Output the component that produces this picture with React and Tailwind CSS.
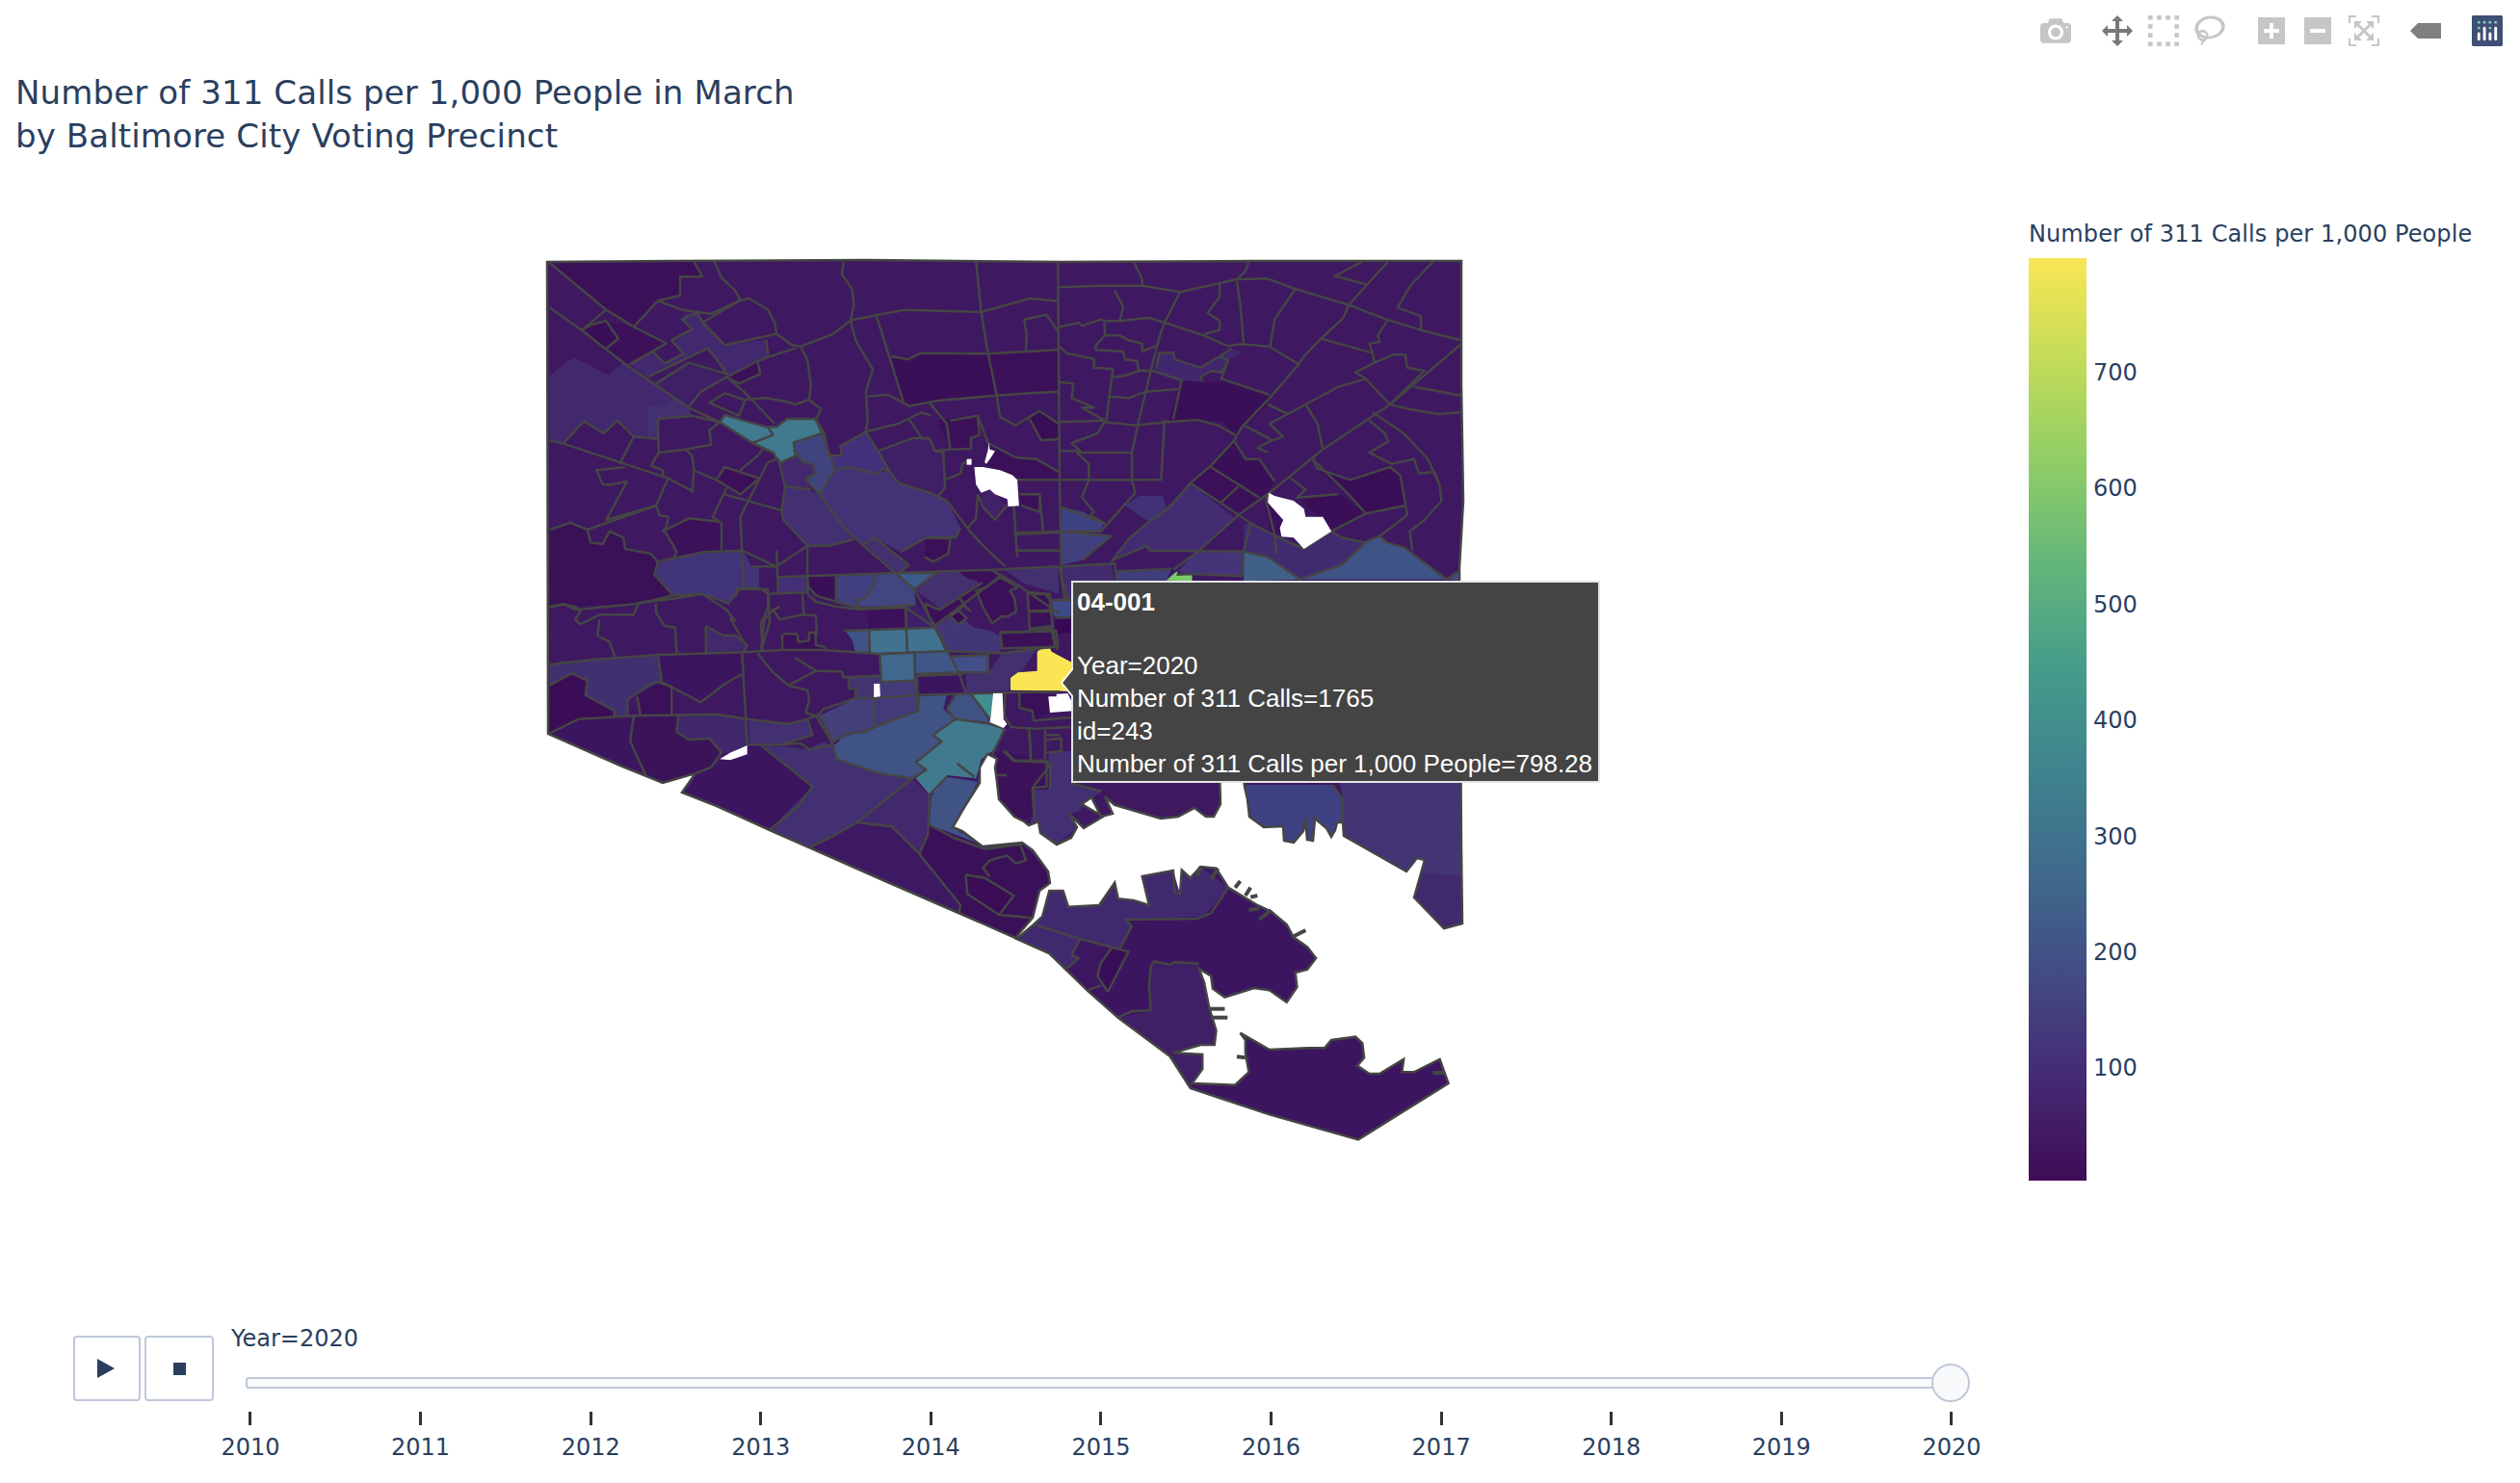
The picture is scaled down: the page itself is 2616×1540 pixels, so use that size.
import React from "react";

const years = [2010, 2011, 2012, 2013, 2014, 2015, 2016, 2017, 2018, 2019, 2020];
const colorTicks = [700, 600, 500, 400, 300, 200, 100];

// outline of the city north of the harbour, page coordinates
const mainland =
  "568,272 700,271 900,270 1100,272 1300,271 1517,271 1517,400 1519,520 1515,590 1517,880 1518,959 1499,964 1468,932 1479,893 1471,891 1460,905 1395,868 1394,854 1388,854 1386,862 1382,869 1377,860 1365,850 1363,873 1357,872 1355,850 1353,863 1343,875 1333,873 1332,858 1312,859 1297,848 1295,830 1292,817 1290,800 1266,800 1267,835 1260,848 1252,848 1240,839 1223,848 1205,850 1157,836 1147,827 1155,845 1143,848 1133,828 1123,835 1145,848 1125,860 1110,845 1118,859 1112,870 1097,877 1080,865 1078,853 1068,857 1063,853 1053,848 1037,830 1035,812 1033,797 1035,788 1025,783 1017,797 1017,813 1000,840 989,859 999,863 1020,879 1061,875 1072,883 1088,905 1090,917 1079,925 1072,953 1054,974 995,948 919,915 840,880 799,862 744,837 708,823 722,803 688,813 644,795 569,762";

// each frame maps a zoomed crop of the plot back to the page
const frames = {
  a: "translate(540 250) scale(0.35714 0.33333)",
  b: "translate(1000 250) scale(0.35714 0.33333)",
  c: "translate(540 600) scale(0.35714 0.33333)",
  d: "translate(1000 880) scale(0.35714 0.33333)",
  e: "translate(1000 780) scale(0.33333 0.33333)",
  f: "translate(900 560) scale(0.33333 0.33333)",
};

const fills = {
  a: [
    ["#3c1059", "85,68 250,215 330,268 400,187 465,170 465,112 530,112 505,65"],
    ["#3a0f58", "180,278 205,262 250,250 285,305 247,335"],
    ["#3c1159", "250,335 285,305 250,250 330,268 425,320 318,385"],
    ["#42286c", "85,420 155,362 255,418 300,380 445,490 420,510 368,512 368,618 330,610 282,560 243,600 185,562 125,632 85,622"],
    ["#43306f", "368,512 420,510 445,490 490,520 500,545 405,555 402,618 368,618"],
    ["#42286e", "480,225 515,225 595,325 715,308 722,365 600,425 545,335 370,425 320,385 385,345 420,382 475,352 440,310 500,275 470,245"],
    ["#3f1f66", "395,445 490,380 600,425 525,470 490,518 445,490"],
    ["#3c1059", "600,425 690,375 698,415 635,445"],
    ["#417a8f", "580,565 595,543 715,580 745,580 775,555 858,555 878,600 795,628 800,670 755,692 735,660 675,630"],
    ["#41457f", "795,628 880,602 915,715 895,745 870,790 830,742 860,725 850,695 820,688 795,650"],
    ["#43286f", "755,695 800,672 820,688 850,695 860,725 830,742 845,775 770,765"],
    ["#433073", "765,765 830,775 870,790 965,930 900,950 835,950 765,870 760,840 770,790"],
    ["#43307a", "930,640 1005,595 1040,655 1070,690 1075,715 1050,710 1035,725 950,705 915,715 895,670 935,668"],
    ["#433376", "915,715 950,705 1035,725 1070,715 1100,755 1190,785 1240,810 1280,895 1265,925 1180,925 1105,970 1030,925 995,945 945,900 870,790 895,745"],
    ["#3f1f66", "1040,655 1140,615 1190,615 1205,655 1230,660 1235,770 1215,795 1190,785 1100,755 1075,720"],
    ["#390f57", "1080,360 1125,370 1165,350 1360,352 1385,480 1210,498 1130,515 1115,510"],
    ["#3c1059", "1360,352 1565,340 1565,470 1385,482"],
    ["#3c1059", "1212,560 1240,555 1330,545 1335,605 1310,615 1310,648 1250,650"],
    ["#3a0e56", "1480,555 1510,530 1565,570 1565,618 1515,622"],
    ["#3c1059", "1360,630 1440,675 1500,680 1565,720 1565,745 1440,745 1445,735 1380,710 1350,700"],
    ["#3c1059", "600,705 695,740 640,790 595,770 570,745"],
    ["#3c1159", "420,905 490,865 580,875 585,965 460,990 440,940"],
    ["#3c1059", "1180,930 1250,928 1245,975 1200,1000 1175,985"],
    ["#3c1059", "1450,790 1510,790 1510,845 1455,825"],
    ["#412269", "1335,800 1365,775 1415,825 1380,870 1345,830"],
    ["#3a1157", "88,900 145,878 195,900 205,940 240,945 260,905 300,925 305,960 380,975 400,1000 390,1040 445,1105 345,1130 85,1140"],
    ["#423478", "400,1005 535,970 645,965 650,1080 625,1100 605,1130 530,1100 445,1105 390,1040"],
    ["#43347a", "650,968 672,1015 695,1020 695,1078 650,1078"],
    ["#432f75", "745,1048 830,1045 835,1095 750,1095"],
    ["#3a0f58", "835,1048 918,1045 918,1125 860,1105 835,1075"],
    ["#424080", "920,1045 1030,1040 1030,1065 1005,1110 980,1120 980,1140 920,1125"],
    ["#414580", "985,1140 980,1120 1005,1110 1030,1065 1035,1040 1090,1035 1145,1085 1150,1135"],
    ["#3e5a8a", "1095,1035 1210,1035 1145,1085"],
    ["#43306f", "1210,1035 1375,1025 1395,1045 1280,1130 1220,1145 1150,1090"],
    ["#43306f", "1100,1030 1130,1010 1030,925 1000,945 1090,1030"],
    ["#43306f", "1400,1020 1565,1015 1565,1100 1470,1070"],
  ],
  b: [
    ["#3a0e56", "195,555 225,525 275,570 275,620 225,622"],
    ["#390f57", "635,435 695,440 750,440 755,410 760,430 890,480 885,510 790,605 750,560 620,565 595,565"],
    ["#390f57", "790,620 820,680 860,680 905,750 885,780 860,800 720,705"],
    ["#3c1059", "665,755 720,705 860,800 805,850"],
    ["#3a0f58", "975,800 1090,790 1170,850 1070,905"],
    ["#390e57", "1030,710 1125,745 1240,705 1270,730 1285,820 1170,850 1120,790"],
    ["#3c0f5a", "880,810 930,870 920,915 895,915 880,830"],
    ["#41276e", "560,400 570,350 610,348 615,370 690,395 745,360 780,335 810,348 770,372 750,410 720,405 690,425 695,440 640,435 555,405"],
    ["#3f4282", "285,830 350,845 410,880 395,905 285,908"],
    ["#41407e", "285,908 430,920 345,995 285,1010"],
    ["#432c6e", "285,1015 430,1005 440,1060 310,1115 290,1060"],
    ["#413278", "470,825 510,795 580,795 590,830 540,875"],
    ["#432c72", "660,755 790,865 680,965 540,965 535,950 435,995 480,930 590,830 610,810"],
    ["#433578", "680,965 815,968 810,1045 665,1040 625,1030"],
    ["#413e7e", "445,1030 605,1022 590,1060 445,1060"],
    ["#412b70", "815,885 835,880 900,915 990,960 1070,905 1100,925 1165,940 1100,1010 985,1055 885,985 815,968"],
    ["#406088", "815,968 885,985 980,1055 815,1060"],
    ["#3f5486", "985,1055 1100,1010 1160,945 1210,920 1230,940 1280,955 1400,1055"],
    ["#3e1a60", "1210,920 1290,860 1340,870 1298,905 1305,965 1405,1055 1280,955 1230,940"],
    ["#424a80", "1400,1055 1447,1030 1447,1060"],
    ["#7ccc6a", "590,1058 620,1030 625,1040 665,1038 665,1060"],
    ["#3f4a88", "260,1120 310,1118 310,1170 265,1170"],
    ["#380955", "265,1175 312,1175 312,1222 270,1222"],
  ],
  c: [
    ["#41306f", "85,270 400,240 412,325 342,360 312,378 312,432 275,430 272,415 190,365 195,320 150,298 85,335"],
    ["#3a0d56", "85,340 150,298 195,320 190,365 275,415 272,432 170,440 85,485"],
    ["#3a1158", "340,370 400,325 440,340 440,428 350,430"],
    ["#3c1560", "405,245 645,235 645,300 595,330 525,388 440,340 412,325"],
    ["#3c1560", "85,485 170,440 330,432 320,510 365,615 415,638 290,585"],
    ["#3a1359", "335,430 455,428 455,480 490,505 550,500 585,545 555,590 415,638 365,615 320,510 330,475"],
    ["#41276c", "460,430 570,425 660,440 660,520 610,545 585,545 550,500 490,505 455,480"],
    ["#423070", "665,445 780,455 835,440 850,490 755,520 665,520"],
    ["#3c1560", "470,668 510,610 555,590 610,560 660,522 700,522 850,650 725,785 570,710"],
    ["#433073", "700,522 760,525 840,535 880,510 910,525 920,565 1045,610 1140,625 980,762 840,840 725,785 850,650"],
    ["#3d1963", "840,840 980,762 1080,775 1160,860 1280,1020 1275,1045 1060,945"],
    ["#42286c", "980,762 1140,628 1190,675 1190,770 1160,860 1080,775"],
    ["#3a1158", "1165,860 1190,770 1260,810 1350,845 1460,830 1535,915 1540,950 1510,975 1490,1060 1440,1122 1275,1045 1280,1020"],
    ["#3a0d56", "1295,925 1350,935 1435,990 1392,1050 1300,985"],
    ["#3f5385", "910,525 950,485 1000,480 1155,415 1160,370 1240,365 1230,410 1265,440 1200,490 1225,510 1150,575 1180,598 1140,625 1045,610 920,565"],
    ["#417a8f", "1265,440 1365,455 1405,470 1385,530 1340,565 1325,625 1240,615 1235,650 1190,675 1150,625 1180,598 1150,575 1225,510 1200,490"],
    ["#3f5385", "1195,680 1240,620 1330,635 1285,730 1260,780 1340,830 1190,770"],
    ["#3f5385", "1240,410 1265,365 1310,362 1365,450 1265,440"],
    ["#428d90", "1310,362 1385,360 1365,440"],
    ["#43407a", "870,430 975,375 1030,375 1030,465 910,510"],
    ["#433a7a", "1030,375 1025,325 1150,320 1155,415 1030,465"],
    ["#43346f", "955,310 1045,305 1050,325 1025,325 1030,375 975,375 975,345 955,345"],
    ["#41688d", "1045,240 1145,235 1148,320 1050,325"],
    ["#3f5686", "1150,235 1240,228 1275,295 1150,298"],
    ["#414e88", "1255,245 1360,240 1360,295 1275,295"],
    ["#3c1560", "1155,300 1275,298 1295,358 1155,365"],
    ["#43306f", "1295,300 1360,295 1400,235 1500,225 1420,350 1298,358"],
    ["#3a1158", "762,175 805,175 808,200 840,195 840,170 858,170 860,210 885,215 885,225 765,225"],
    ["#3f5386", "945,165 1015,165 1015,235 975,235 965,195"],
    ["#41728f", "1015,165 1120,160 1125,230 1020,235"],
    ["#41728f", "1125,160 1205,155 1235,228 1128,230"],
    ["#42286c", "540,150 590,180 625,180 660,210 650,230 540,235"],
    ["#433676", "1205,155 1265,110 1320,155 1365,165 1400,185 1395,235 1240,228"],
    ["#3a1158", "1395,170 1545,165 1555,210 1400,218"],
    ["#3a0e58", "1478,100 1535,100 1540,155 1478,155"],
  ],
  d: [
    ["#412970", "1165,0 1288,75 1318,32 1340,38 1310,155 1397,253 1450,238 1447,0"],
  ],
  e: [
    ["#3a1158", "105,10 130,0 155,30 260,30 265,50 215,115 220,195 190,215 160,205 110,150 105,100"],
    ["#433073", "265,20 270,0 340,0 335,100 430,125 405,145 355,190 330,195 355,238 290,290 240,255 235,220 205,230 220,195 215,115 265,50"],
    ["#3e1960", "420,105 700,105 720,100 800,130 800,165 780,205 720,178 670,205 615,210 470,168 440,140"],
    ["#3f4282", "875,105 1150,105 1180,150 1182,220 1165,222 1160,240 1145,268 1130,240 1095,210 1090,278 1070,275 1065,210 1060,250 1030,285 1000,280 995,235 935,238 890,205 885,150"],
    ["#433474", "1150,0 1560,0 1560,390 1380,375 1185,265 1182,150"],
  ],
  f: [
    ["#3c1059", "180,200 225,220 285,180 305,205 210,270 190,235"],
    ["#3c1059", "290,180 360,135 375,150 305,200"],
    ["#370b55", "260,240 285,222 310,245 285,265"],
    ["#3c1059", "285,100 415,95 410,120 370,150 340,130 310,120"],
    ["#3c1059", "340,160 370,150 410,120 470,150 445,160 460,185 465,225 440,240 420,240 390,262 360,210 355,195"],
    ["#3c1560", "155,425 300,420 308,480 158,482"],
    ["#3c1159", "0,215 120,212 122,275 5,278"],
    ["#3e2068", "125,210 180,208 210,270 125,275"],
    ["#3a1158", "415,290 580,285 590,335 420,340"],
    ["#3a1158", "503,225 570,228 578,278 507,282"],
    ["#3a1158", "500,165 555,170 570,190 572,220 503,220"],
    ["#370955", "585,245 635,243 635,290 590,293"],
    ["#3f4a88", "575,190 635,188 635,240 582,238"],
    ["#3a1158", "475,480 555,478 565,490 565,540 520,565 515,535 475,525"],
    ["#3c1159", "430,660 565,695 570,780 410,780 412,700"],
    ["#fae655", "447,432 470,415 530,410 530,350 545,340 570,340 575,350 640,385 640,475 585,472 447,470"],
  ],
};

const lines = {
  a: [
    "85,68 250,215 330,268 425,320 318,385",
    "85,208 180,280 300,380 490,520 580,565",
    "180,278 250,215",
    "250,335 285,305 250,250 205,262 180,278",
    "330,268 400,187 465,170 465,112 530,112 505,65",
    "400,187 470,215 555,228 640,185",
    "565,65 585,115 625,155 640,185 665,180 720,215 740,255 745,290 790,325 815,330 910,290 960,248 1035,232 1120,215 1340,222 1480,180 1565,188",
    "940,65 935,105 965,150 970,200 960,248 975,310 1025,400 1005,470 1010,560 1005,595 1040,655 1075,720 1100,755 1190,785 1240,810 1300,895 1345,950 1410,1015",
    "1325,65 1340,222 1360,352 1385,480 1395,550",
    "1035,232 1115,505 1130,515 1215,498 1385,482 1480,475 1565,470",
    "1080,360 1125,370 1165,350 1360,352 1565,340",
    "1005,485 1070,480 1130,515",
    "1465,245 1530,230 1565,285",
    "1465,245 1472,290 1470,345",
    "745,290 595,325 530,255 515,225 470,245 500,275 440,310 475,352 420,382 385,345 320,385",
    "530,255 640,185",
    "715,308 722,365",
    "800,335 722,362 690,375 600,425 525,470 490,518",
    "690,375 698,415 635,445 600,425",
    "370,425 545,335 590,395 600,415 490,380 395,445",
    "600,425 650,470 740,570",
    "815,330 835,370 845,450 840,495 875,525 860,555",
    "840,495 800,510 770,500 715,490 655,495 635,545 550,505 595,475 650,495",
    "580,565 595,543 715,580 745,580 775,555 858,555 878,600 795,628 800,670 755,692 735,660 675,630 580,565",
    "675,630 735,605 720,580",
    "878,600 915,715 895,745 870,790 830,742 860,725 850,695 820,688 795,650",
    "858,555 885,600 895,670 935,668 930,640 1005,595",
    "915,715 950,705 1035,725 1055,710 1075,720",
    "1005,595 1100,570 1165,535 1195,545",
    "1040,655 1140,615 1190,615 1205,655 1230,660 1235,770 1215,795",
    "1130,555 1170,620",
    "1190,505 1240,570 1250,650 1205,655",
    "1250,560 1330,545 1360,630",
    "1330,545 1335,605 1310,615 1310,648 1250,650",
    "1360,630 1440,675 1500,680 1565,720",
    "1395,550 1440,575 1510,530 1565,570",
    "1480,555 1515,622 1565,618",
    "1440,745 1565,745",
    "1450,790 1510,790 1510,845 1455,825",
    "1510,790 1520,905",
    "1440,745 1435,830 1445,985",
    "1445,910 1565,905",
    "1445,965 1565,965",
    "1330,790 1345,830 1380,870 1415,825",
    "1330,790 1325,865 1300,895",
    "1235,745 1280,725 1285,695 1310,680",
    "85,622 125,632 430,740 500,780",
    "125,632 185,562 243,600 282,560 330,610 400,618",
    "400,555 500,545 580,565",
    "400,555 403,660 480,650 555,635 550,590 580,565",
    "330,610 290,695",
    "403,660 380,700 415,715 415,735",
    "480,650 500,670 505,715 500,785",
    "505,715 570,745 595,705 695,740 640,790 570,745",
    "595,790 760,840",
    "600,770 560,860 585,880 585,965",
    "640,715 690,670 705,650",
    "745,680 720,690 640,860 650,1080",
    "750,680 770,765 760,840 765,870 835,950 900,950 970,930",
    "770,765 845,775",
    "870,790 945,900 1090,1035 1145,1085 1205,1200 1235,1260",
    "430,740 395,825 250,870 310,750 265,760 240,760 222,715 305,705",
    "395,825 195,900 145,878 88,900",
    "195,900 205,940 240,945 260,905 300,925 305,960 380,975 400,1000 390,1040 445,1105",
    "395,825 405,855 430,860 425,890 415,905 490,865 580,875",
    "420,905 440,940 455,970 445,990",
    "85,1140 130,1133 160,1150 345,1130 445,1105",
    "400,1000 535,970 645,965 745,1015 835,950",
    "835,950 835,1095",
    "745,965 750,1100",
    "745,1048 1095,1035 1375,1025 1565,1015",
    "672,1015 745,1015",
    "445,1105 530,1100 605,1130 625,1100 630,1085 690,1080 722,1100 725,1190 705,1260",
    "835,1095 725,1100",
    "835,1048 835,1075 860,1105 920,1125 990,1145 1150,1135",
    "918,1045 918,1125",
    "1030,1040 1030,1065 1005,1110 980,1120 980,1140",
    "1095,1035 1210,1035 1145,1085",
    "1180,925 1250,928 1245,975 1200,1000 1175,985",
    "1000,945 1030,925 1130,1010 1100,1035",
    "1105,970 1180,925 1265,925 1280,895",
    "1375,1025 1395,1045 1205,1200",
    "1370,1025 1450,1075 1565,1160",
  ],
  b: [
    "275,65 280,750 285,1050 305,1115",
    "495,65 520,120 520,140",
    "830,65 820,95 795,120 885,118 965,150 1120,200 1230,245 1330,278 1447,310",
    "275,145 400,140 520,140 630,160 795,120",
    "630,160 585,255 570,300 545,405 510,560 490,660 490,745",
    "440,155 465,205 455,250 540,240 585,255 700,295 770,328 810,322 890,330 975,385",
    "745,135 745,175 710,225 745,250 745,278 700,290",
    "795,125 805,200 815,320",
    "965,150 905,245 892,330",
    "1235,65 1120,200 1105,240 1040,305 990,360 975,385 890,490 810,580 785,625 720,700 660,755 600,830 540,875 480,930 430,1000",
    "1365,65 1300,140 1262,208 1330,235 1330,278",
    "1160,65 1080,110 1170,135",
    "1040,305 1190,350 1195,380 1140,410 1170,430 1240,510",
    "1235,245 1205,295 1210,315 1180,320 1190,350",
    "1195,380 1250,355 1285,355 1290,395 1340,405 1240,510",
    "1447,322 1240,510 1045,650 890,785 805,850 685,965 610,1025",
    "1310,455 1447,482",
    "1240,510 1300,525 1380,540 1447,535",
    "1170,430 1090,455 995,510 890,570 930,610 890,625 855,645 885,660",
    "995,510 1030,570 1045,650",
    "885,510 945,540",
    "815,575 895,620",
    "1180,560 1225,600 1235,625 1180,660 1245,695 1310,680 1325,725 1370,720 1385,765 1390,810 1340,870 1298,905 1305,965",
    "1190,535 1280,600 1350,680 1385,760",
    "1015,680 1030,710 1125,745 1240,705 1270,730 1285,820 1290,855 1210,920",
    "1015,680 1120,790 1170,850 1285,825",
    "1170,850 1070,905 1100,925 1165,940 1210,920",
    "945,735 995,775 970,800 1090,790",
    "660,755 760,825 835,880 815,968 810,1045",
    "720,705 860,800",
    "750,815 800,765",
    "785,620 820,680 860,680 905,750",
    "885,785 880,810 905,915 910,975",
    "815,968 885,985 980,1055 1100,1010 1160,950 1165,940",
    "1210,920 1230,940 1280,955 1405,1055 1447,1025",
    "835,880 900,915 990,960 1070,905",
    "540,965 815,968",
    "435,995 535,950 540,965",
    "345,995 430,920 285,905 400,905 500,785 490,745 365,745",
    "280,745 575,745 585,560 595,565 680,558 740,575 790,605",
    "490,660 330,660 365,695 365,745 345,800 380,845 370,855 410,880 285,830",
    "280,655 340,655 315,630 390,600 410,565 500,575 590,565",
    "280,565 410,560 345,520 380,520 315,490 320,445 280,440",
    "275,270 335,255 345,265 400,245 410,250 455,250",
    "275,325 300,350 380,368 380,395 435,400 415,565",
    "410,255 412,295 385,325 385,340 465,345 470,370 505,375 510,405 545,405",
    "412,295 455,295 480,310 520,320 520,345 565,325 570,300",
    "435,425 470,420 510,405 550,405 635,435 610,555",
    "420,485 480,490 530,470 625,462",
    "560,400 570,350 610,348 615,370 690,395 745,360 780,335",
    "745,360 770,372 750,410 720,405 690,425 695,440",
    "770,372 750,430 890,480",
    "145,915 285,908",
    "150,965 285,965",
    "290,1015 440,1005 445,1058",
    "445,1030 605,1022",
    "620,1040 665,1038 810,1045",
    "260,1120 305,1118",
    "190,1155 260,1150",
    "195,1100 250,1100 255,1120 260,1200 195,1208",
    "110,1222 270,1215 275,1260",
  ],
  c: [
    "85,90 125,82 160,90 175,105 160,130 175,145 230,115 330,115 345,78 445,65 530,50 600,100 625,135",
    "230,130 225,180 260,200 275,245",
    "395,80 395,110 420,150 450,155 455,235",
    "540,150 540,235",
    "540,150 590,180 625,180 660,210 650,230",
    "625,60 635,35 720,35 720,95 700,140 705,225",
    "610,125 650,200",
    "85,270 210,255 400,240 645,232 760,225 885,225 1050,238 1240,228 1400,235 1568,212",
    "400,240 412,325 440,340 525,388 595,330 645,300",
    "312,378 340,360 370,335 400,325 440,340 440,428",
    "312,378 312,430",
    "340,370 350,430",
    "85,335 150,298 195,320 190,365 275,415 272,432",
    "85,485 170,440 330,430 570,425 660,440 780,455 835,440 870,425 880,410 975,375 1030,375 1155,365 1400,358 1568,355",
    "645,235 660,520",
    "690,235 735,295 780,335 835,350 840,380 830,420 860,430",
    "780,335 860,290 800,250",
    "860,290 935,292 940,310 1045,305",
    "1045,240 1050,325 1148,320 1145,235",
    "1148,320 1155,415",
    "1155,300 1275,295 1360,295 1360,240 1255,245",
    "1205,155 1275,295 1295,358",
    "955,310 955,345 975,345 975,375",
    "1030,375 1030,465",
    "870,430 910,510 950,485 1000,480 1030,465 1155,415 1160,370",
    "330,430 320,510 365,615",
    "460,430 455,480 490,505 550,500 585,545 555,590 510,610",
    "850,490 755,520 700,520 660,520",
    "835,440 850,490",
    "860,430 910,520 840,535 815,515 760,520",
    "700,522 850,650 810,710 725,785",
    "910,525 920,565 1045,610 1140,625 980,762 900,810 840,840",
    "980,762 1080,775 1160,860 1280,1020 1275,1045",
    "1190,675 1185,800 1160,860",
    "1140,625 1180,598 1150,575 1225,510 1200,490 1265,440 1365,455 1405,470",
    "1190,675 1240,620",
    "1240,410 1265,365",
    "1240,410 1265,440",
    "1310,362 1365,440",
    "1405,540 1435,570 1530,570 1530,650 1490,655 1495,750",
    "1480,475 1485,565",
    "1530,490 1568,490",
    "1395,170 1545,165 1555,215",
    "1400,218 1395,170",
    "1295,925 1350,935 1435,990 1392,1050 1300,985 1295,925",
    "1392,1050 1490,1060",
    "1365,880 1415,865 1440,890 1470,880 1455,835",
    "1365,880 1345,905 1365,930",
    "762,175 762,225",
    "765,175 805,175 808,200 840,195 840,170 858,170 860,210 885,215 885,225",
    "755,90 735,100 710,130 700,225",
    "735,100 755,130 820,115 860,118 862,180",
    "820,50 825,115",
    "835,5 835,50 860,75 920,90 985,98 1120,92 1200,150",
    "940,165 1205,155",
    "1015,165 1015,235",
    "1120,90 1125,230",
    "1270,578 1320,620",
    "1190,770 1260,810 1350,845 1460,830",
  ],
  d: [],
  e: [
    "105,75 135,75",
    "130,0 155,30 260,30 265,50 215,115 220,195",
    "335,100 430,125",
    "1150,105 1182,150 1182,220",
  ],
  f: [
    "470,150 445,160 460,185 465,225 440,240 420,240 390,262 360,210 355,195 340,160 370,150 415,118 470,150",
    "180,200 225,220 360,135",
    "285,180 305,205 210,270 190,235 180,200",
    "260,240 285,222 310,245 285,265 260,240",
    "300,205 325,225",
    "503,165 555,170 570,190 578,278 507,282 500,165",
    "503,225 575,225",
    "415,290 580,285 590,335 420,340 415,290",
    "590,335 595,345",
    "600,85 615,180 635,188",
    "575,190 635,188",
    "585,245 635,243",
    "475,480 475,525 515,535 520,565 635,555",
    "430,480 428,550 450,585 520,590 635,585",
    "505,590 510,690",
    "555,595 555,685",
    "430,660 460,690 570,695",
    "560,625 605,620 605,660 560,665",
    "570,695 570,780",
    "430,590 390,670",
    "155,425 158,482",
    "155,425 300,420",
  ],
};

// peninsula south of the middle branch, in frame d
const peninsula =
  "155,285 205,240 230,215 250,135 290,135 305,185 395,180 440,110 450,160 495,165 540,180 520,90 610,72 615,140 630,145 635,70 660,95 690,60 735,65 770,125 855,180 895,200 940,240 960,280 1000,310 1025,345 1000,380 965,390 970,435 940,482 890,445 845,438 760,467 725,440 720,400 685,378 700,420 715,500 735,570 730,615 690,615 610,640 695,645 695,690 665,735 790,740 830,700 820,640 820,600 805,578 890,630 1000,625 1050,625 1070,600 1140,590 1160,610 1165,655 1145,680 1180,705 1210,705 1280,660 1275,700 1310,700 1385,660 1410,735 1148,910 890,832 660,750 600,650 450,530 360,445 250,330";

const peninsulaFills = [
  ["#412970", "205,240 230,215 250,135 290,135 305,185 395,180 440,110 450,160 540,180 520,90 610,72 630,145 635,70 660,95 690,60 770,125 735,170 700,215 470,225 490,245 455,315 340,285"],
  ["#412970", "155,285 205,240 340,285 315,335 330,345 300,378 250,330"],
  ["#3d1661", "340,285 455,315 480,325 420,450 400,430 360,445 300,378 335,345 315,335"],
  ["#3a0d5a", "430,315 480,328 420,450 390,400 400,360"],
  ["#3f1f66", "555,355 600,360 685,362 700,420 715,500 735,570 730,615 690,615 610,640 695,645 695,690 665,735 660,750 600,650 450,530 545,508 540,430 545,370"],
];

const peninsulaLines = [
  "205,240 340,285 480,325 420,450",
  "340,285 315,335 335,345 300,378",
  "430,315 400,360 390,400 420,450",
  "360,445 400,430",
  "455,315 490,245 470,225 680,222 720,205 770,125",
  "450,530 490,510 545,508 540,430 545,370 555,355 600,365 615,357 685,362",
];

const peninsulaPiers = [
  "680,90 690,60",
  "720,100 740,65",
  "790,125 805,105",
  "820,150 835,125",
  "835,155 855,150",
  "830,195 860,190",
  "860,225 895,195",
  "955,280 995,258",
  "715,503 760,503",
  "720,530 768,530",
  "795,652 820,655",
  "1365,702 1400,702",
];

const holes = [
  ["c", "1028,330 1045,330 1047,370 1028,372"],
  ["c", "1368,430 1375,360 1402,360 1405,440 1415,455 1405,468 1365,450"],
  ["c", "580,565 610,545 660,522 660,550 610,568"],
  ["a", "1298,680 1312,680 1312,698 1298,698"],
  ["a", "1362,628 1365,650 1380,655 1372,670 1355,695 1350,690 1360,650"],
  ["a", "1320,705 1345,705 1395,715 1430,730 1445,745 1450,826 1418,828 1416,805 1380,790 1365,775 1340,785 1325,760"],
  ["b", "888,785 905,795 960,810 990,835 995,860 1045,860 1070,905 990,960 960,925 925,922 920,895 930,870 885,815"],
  ["f", "565,490 590,490 590,482 625,480 640,510 640,535 570,540"],
];

const Poly = ({ points, fill }) => <polygon points={points} fill={fill} />;

const Line = ({ points, width = "2.5" }) => (
  <polyline points={points} fill="none" stroke="#454545" strokeWidth={width} strokeLinejoin="round" vectorEffect="non-scaling-stroke" />
);

const BaltimoreMap = () => (
  <svg className="ml-[560px] mt-[98px] h-[930px] w-[970px] shrink-0" viewBox="560 262 970 930">
    <clipPath id="land">
      <polygon points={mainland} />
    </clipPath>
    <polygon points={mainland} fill="#3e1860" />
    <g clipPath="url(#land)">
      {Object.keys(frames).map((key) => (
        <g key={key} transform={frames[key]}>
          {fills[key].map(([fill, points], i) => (
            <Poly key={i} fill={fill} points={points} />
          ))}
        </g>
      ))}
      {Object.keys(frames).map((key) => (
        <g key={key} transform={frames[key]}>
          {lines[key].map((points, i) => (
            <Line key={i} points={points} />
          ))}
        </g>
      ))}
    </g>
    <polygon points={mainland} fill="none" stroke="#454545" strokeWidth="2.5" />
    <g transform={frames.d}>
      <polygon points={peninsula} fill="#3c1560" />
      {peninsulaFills.map(([fill, points], i) => (
        <Poly key={i} fill={fill} points={points} />
      ))}
      <polygon points={peninsula} fill="none" stroke="#454545" strokeWidth="2.5" vectorEffect="non-scaling-stroke" />
      {peninsulaLines.map((points, i) => (
        <Line key={i} points={points} />
      ))}
      {peninsulaPiers.map((points, i) => (
        <Line key={i} points={points} width="4" />
      ))}
    </g>
    {holes.map(([key, points], i) => (
      <g key={i} transform={frames[key]}>
        <polygon points={points} fill="#fff" />
      </g>
    ))}
  </svg>
);

const Grey = ({ children, width, viewBox, ml, fill = "#c6c6c6", height = "h-8" }) => (
  <svg className={`${width} ${height} ${ml} shrink-0`} viewBox={viewBox} fill={fill}>
    {children}
  </svg>
);

const Toolbar = () => (
  <div className="flex h-16 items-center justify-end pr-[18px]">
    <Grey width="w-8" ml="ml-0" viewBox="0 0 1000 1000">
      <path
        transform="matrix(1 0 0 -1 0 850)"
        d="m500 450c-83 0-150-67-150-150 0-83 67-150 150-150 83 0 150 67 150 150 0 83-67 150-150 150z m400 150h-120c-16 0-34 13-39 29l-31 93c-6 15-23 28-40 28h-340c-16 0-34-13-39-28l-31-94c-6-15-23-28-40-28h-120c-55 0-100-45-100-100v-450c0-55 45-100 100-100h800c55 0 100 45 100 100v450c0 55-45 100-100 100z m-400-550c-138 0-250 112-250 250 0 138 112 250 250 250 138 0 250-112 250-250 0-138-112-250-250-250z m365 380c-19 0-35 16-35 35 0 19 16 35 35 35 19 0 35-16 35-35 0-19-16-35-35-35z"
      />
    </Grey>
    <Grey width="w-8" ml="ml-8" fill="#787878" viewBox="0 0 1000 1000">
      <path
        transform="matrix(1 0 0 -1 0 850)"
        d="m1000 350l-187 188 0-125-250 0 0 250 125 0-188 187-187-187 125 0 0-250-250 0 0 125-188-188 186-187 0 125 252 0 0-250-125 0 187-188 188 188-125 0 0 250 250 0 0-126 187 188z"
      />
    </Grey>
    <Grey width="w-8" ml="ml-4" viewBox="0 0 1000 1000">
      {[0, 286, 571, 857].map((x) =>
        [0, 286, 571, 857].map((y) =>
          x === 0 || x === 857 || y === 0 || y === 857 ? <rect key={`${x}-${y}`} x={x} y={y} width="143" height="143" /> : null
        )
      )}
    </Grey>
    <Grey width="w-8" ml="ml-4" viewBox="0 0 1031 1031">
      <path
        transform="matrix(1 0 0 -1 0 850)"
        d="m1018 538c-36 207-290 336-568 286-277-48-473-256-436-463 10-57 36-108 76-151-13-66 11-137 68-183 34-28 75-41 114-42l-55-70 0 0c-2-1-3-2-4-3-10-14-8-34 5-45 14-11 34-8 45 4 1 1 2 3 2 5l0 0 113 140c16 11 31 24 45 40 4 3 6 7 8 11 48-3 100 0 151 9 278 48 473 255 436 462z m-624-379c-80 14-149 48-197 96 42 42 109 47 156 9 33-26 47-66 41-105z m-187-74c-19 16-33 37-39 60 50-32 109-55 174-68-42-25-95-24-135 8z m360 75c-34-7-69-9-102-8 8 62-16 128-68 170-73 59-175 54-244-5-9 20-16 40-20 61-28 159 121 317 333 354s407-60 434-217c28-159-121-318-333-355z"
      />
    </Grey>
    <Grey width="w-7" height="h-7" ml="ml-[34px]" viewBox="0 0 28 28">
      <path fillRule="evenodd" d="M0 0h28v28H0z M12 6v6H6v4h6v6h4v-6h6v-4h-6V6z" />
    </Grey>
    <Grey width="w-7" height="h-7" ml="ml-5" viewBox="0 0 28 28">
      <path fillRule="evenodd" d="M0 0h28v28H0z M6 12v4h16v-4z" />
    </Grey>
    <Grey width="w-8" ml="ml-[18px]" viewBox="0 0 1000 1000">
      <path
        transform="matrix(1 0 0 -1 0 850)"
        d="m250 850l-187 0-63 0 0-62 0-188 63 0 0 188 187 0 0 62z m688 0l-188 0 0-62 188 0 0-188 62 0 0 188 0 62-62 0z m-875-938l0 188-63 0 0-188 0-62 63 0 187 0 0 62-187 0z m875 188l0-188-188 0 0-62 188 0 62 0 0 62 0 188-62 0z m-125 188l-1 0-93-94-156 156 156 156 92-93 2 0 0 250-250 0 0-2 93-92-156-156-156 156 94 92 0 2-250 0 0-250 0 0 93 93 157-156-157-156-93 94 0 0 0-250 250 0 0 0-94 93 156 157 156-157-93-93 0 0 250 0 0 250z"
      />
    </Grey>
    <Grey width="w-8" height="h-4" ml="ml-8" fill="#7f7f7f" viewBox="0 0 32 16">
      <path d="M0 8 8 0h24v16H8z" />
    </Grey>
    <svg className="ml-8 h-8 w-8 shrink-0" viewBox="0 0 132 132">
      <rect width="132" height="132" rx="6" fill="#3f4f75" />
      {[[78, 54], [102, 30], [78, 30], [54, 30], [30, 30], [30, 54]].map(([cx, cy]) => (
        <circle key={`${cx}-${cy}`} cx={cx} cy={cy} r="6" fill="#80cfbe" />
      ))}
      <path fill="#fff" d="M30 72a6 6 0 0 0-6 6v24a6 6 0 0 0 12 0V78a6 6 0 0 0-6-6z" />
      <path fill="#fff" d="M78 72a6 6 0 0 0-6 6v24a6 6 0 0 0 12 0V78a6 6 0 0 0-6-6z" />
      <path fill="#fff" d="M54 48a6 6 0 0 0-6 6v48a6 6 0 0 0 12 0V54a6 6 0 0 0-6-6z" />
      <path fill="#fff" d="M102 48a6 6 0 0 0-6 6v48a6 6 0 0 0 12 0V54a6 6 0 0 0-6-6z" />
    </svg>
  </div>
);

const ColorBar = () => (
  <div className="ml-[576px] mt-[63px] flex flex-col">
    <div className="h-8 whitespace-nowrap text-[24px] leading-8 tracking-[0.1px]">Number of 311 Calls per 1,000 People</div>
    <div className="mt-[9px] flex h-[958px] shrink-0">
      <div className="h-full w-[60px] bg-[linear-gradient(to_top,#3f0c55,#452a74,#424b84,#3f6a8c,#3f838e,#459c8a,#63b67a,#8fcd66,#c2dc58,#fae655)]" />
      <div className="ml-[7px] pt-[103px]">
        {colorTicks.map((tick) => (
          <div key={tick} className="h-[120.4px] text-[24px] leading-8">
            {tick}
          </div>
        ))}
      </div>
    </div>
  </div>
);

const Tooltip = () => (
  <div className="absolute left-[1112px] top-[603px] h-[210px] w-[549px] border-2 border-[#e4e4e4] bg-[#444] pl-1 pt-[3px] font-['Liberation_Sans',sans-serif] text-[26px] leading-[34px] text-white">
    <svg className="absolute left-[-14px] top-[87px] h-[34px] w-[14px]" viewBox="0 0 14 34">
      <path d="M14 2 2 17l12 15" fill="#444" stroke="#fff" strokeWidth="2" />
    </svg>
    <div className="font-bold">04-001</div>
    <div className="h-[32px]" />
    <div>Year=2020</div>
    <div>Number of 311 Calls=1765</div>
    <div>id=243</div>
    <div className="whitespace-nowrap">Number of 311 Calls per 1,000 People=798.28</div>
  </div>
);

const Slider = () => (
  <div className="mt-[145px]">
    <div className="flex items-start">
      <button className="ml-[76px] mt-[14px] flex h-[68px] w-[70px] items-center justify-center rounded-[4px] border-2 border-[#bec8d9] bg-white pr-[2px]">
        <svg className="h-5 w-[18px]" viewBox="0 0 18 20">
          <path d="M0 0 18 10 0 20z" fill="#2a3f5f" />
        </svg>
      </button>
      <button className="ml-1 mt-[14px] flex h-[68px] w-[72px] items-center justify-center rounded-[4px] border-2 border-[#bec8d9] bg-white">
        <div className="h-[13px] w-[13px] bg-[#2a3f5f]" />
      </button>
      <div className="ml-[18px]">
        <div className="mt-px h-8 text-[24px] leading-8">Year=2020</div>
        <div className="relative ml-[15px] mt-6 h-3 w-[1771px] rounded-[3px] border-2 border-[#bec8d9] bg-[#f8fafc]">
          <div className="absolute right-[-21px] top-[-16px] h-10 w-10 rounded-full border-2 border-[#bec8d9] bg-[#f8fafc]" />
        </div>
      </div>
    </div>
    <div className="ml-[171.7px] mt-[11px] flex">
      {years.map((year) => (
        <div key={year} className="flex w-[176.6px] flex-col items-center">
          <div className="h-[14px] w-[3px] bg-[#333]" />
          <div className="mt-[7px] text-[24px] leading-8">{year}</div>
        </div>
      ))}
    </div>
  </div>
);

export default function App() {
  return (
    <div className="relative h-[1540px] w-[2616px] overflow-hidden bg-white font-['DejaVu_Sans',sans-serif] text-[#2a3f5f]">
      <Toolbar />
      <div className="ml-4 mt-[10px] text-[34px] leading-[45px] tracking-[0.12px]">
        <div>Number of 311 Calls per 1,000 People in March</div>
        <div>by Baltimore City Voting Precinct</div>
      </div>
      <div className="flex h-[1064px]">
        <BaltimoreMap />
        <ColorBar />
      </div>
      <Slider />
      <Tooltip />
    </div>
  );
}
